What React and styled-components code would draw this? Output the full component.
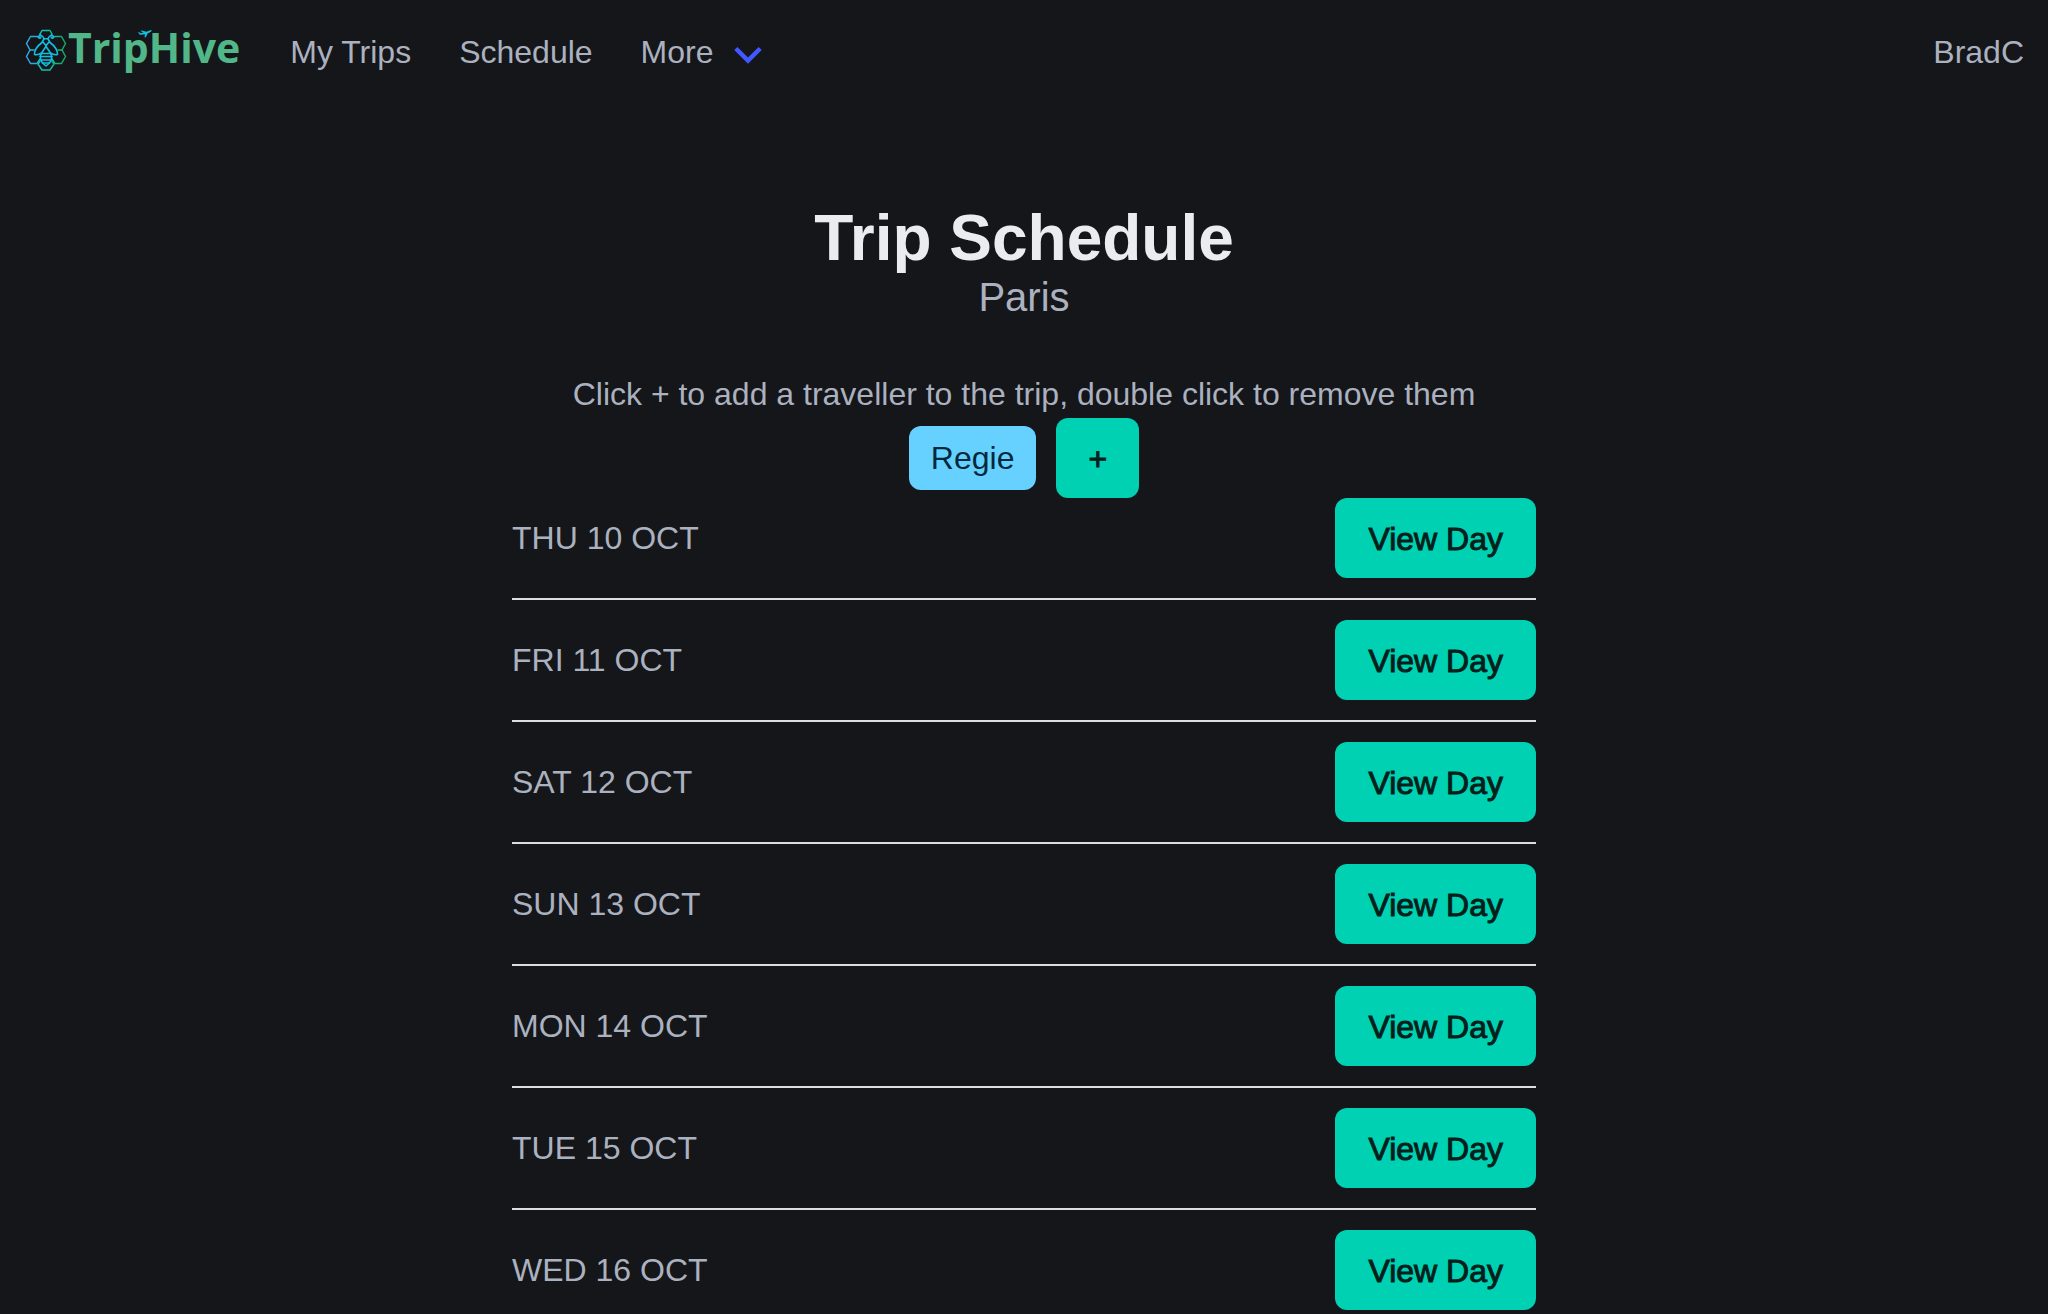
import React from "react";
import styled, { createGlobalStyle } from "styled-components";

const GlobalStyle = createGlobalStyle`
  *, *::before, *::after { box-sizing: border-box; }
  body {
    margin: 0;
    background: #14161a;
    color: #abb1bf;
    font-family: "Liberation Sans", Arial, sans-serif;
    font-size: 32px;
    line-height: 48px;
  }
`;

const Navbar = styled.nav`
  display: flex;
  align-items: stretch;
  justify-content: space-between;
  min-height: 104px;
`;

const NavGroup = styled.div`
  display: flex;
  align-items: stretch;
`;

const Brand = styled.a`
  display: flex;
  align-items: center;
  padding: 0 26px 4px 24px;
  color: #52b788;
  text-decoration: none;
`;

const Wordmark = styled.span`
  position: relative;
  padding-bottom: 6px;
  font-family: "Open Sans", "Noto Sans", sans-serif;
  font-size: 41px;
  font-weight: 700;
`;

const Plane = styled.svg`
  position: absolute;
  top: 7px;
  left: 70px;
`;

const NavLink = styled.a`
  display: flex;
  align-items: center;
  padding: 0 24px;
  color: inherit;
  text-decoration: none;
`;

const NavButton = styled.button`
  display: flex;
  align-items: center;
  gap: 20px;
  padding: 0 24px;
  border: 0;
  background: none;
  color: inherit;
  font: inherit;
  cursor: pointer;
`;

const Chevron = styled.svg`
  display: block;
  margin-top: 6px;
`;

const Section = styled.main`
  display: flex;
  flex-direction: column;
  align-items: center;
  padding: 98px 48px;
`;

const Title = styled.h1`
  margin: 0;
  color: #ebecf0;
  font-size: 64px;
  font-weight: 700;
  line-height: 72px;
`;

const Subtitle = styled.p`
  margin: 0 0 50px;
  font-size: 40px;
  line-height: 46px;
`;

const Hint = styled.p`
  margin: 0;
  text-align: center;
`;

const Travellers = styled.div`
  display: flex;
  align-items: center;
  gap: 20px;
`;

const Tag = styled.button`
  height: 64px;
  padding: 0 22px;
  border: 0;
  border-radius: 12px;
  background: #66d1ff;
  color: #00293d;
  font: inherit;
  cursor: pointer;
`;

const Button = styled.button`
  height: 80px;
  padding: 2px ${(props) => (props.$compact ? 32 : 33)}px 0;
  border: 0;
  border-radius: 12px;
  background: #00d1b2;
  color: #001f1b;
  font: inherit;
  -webkit-text-stroke: 1px currentColor;
  cursor: pointer;
`;

const DayList = styled.ul`
  display: flex;
  flex-direction: column;
  gap: 20px;
  width: 100%;
  max-width: 1024px;
  margin: 0;
  padding: 0;
  list-style: none;
`;

const DayRow = styled.li`
  display: flex;
  align-items: center;
  justify-content: space-between;
  padding-bottom: 20px;
  border-bottom: 2px solid #dddddd;
`;

const days = [
  "THU 10 OCT",
  "FRI 11 OCT",
  "SAT 12 OCT",
  "SUN 13 OCT",
  "MON 14 OCT",
  "TUE 15 OCT",
  "WED 16 OCT",
];

function BeeLogo() {
  return (
    <svg width="44" height="44" viewBox="0 0 44 44" fill="none" strokeLinecap="round" strokeLinejoin="round" aria-hidden="true">
      <defs>
        <linearGradient id="hive" gradientUnits="userSpaceOnUse" x1="2" y1="0" x2="42" y2="0">
          <stop offset="0" stopColor="#38a3eb" />
          <stop offset="0.5" stopColor="#12bfae" />
          <stop offset="1" stopColor="#1aa55c" />
        </linearGradient>
      </defs>
      <g stroke="url(#hive)" strokeWidth="1.5">
        <path d="M16 6 L18 2.500 H26 L28 6 L27 8" />
        <path d="M16 6 L17 8" />
        <path d="M15 9.500 L13 8.500 H6.500 L2.500 15.500 L6 22 H10" />
        <path d="M6 22 L2.500 28.500 L6.500 35.500 H13 L16 31" />
        <path d="M29 9.500 L31 8.500 H37.500 L41.500 15.500 L38 22 H34" />
        <path d="M38 22 L41.500 28.500 L37.500 35.500 H31 L28 31" />
        <path d="M16 33.500 L14 36 L18 42 H26 L30 36 L28 33.500" />
      </g>
      <g stroke="#12bfe3" strokeWidth="1.6">
        <path d="M20 10.800 C19 7.500 16 6.500 14.800 8.200 C14.300 10 15.800 10.800 16.800 9.600" />
        <path d="M24 10.800 C25 7.500 28 6.500 29.200 8.200 C29.700 10 28.200 10.800 27.200 9.600" />
        <path d="M20 10.800 H24 L25.500 13.500 L22 17.500 L18.500 13.500 Z" />
        <path d="M18.500 14 C14 17.500 10 21 10.500 26.500 C13 27 16 26 17.500 25 L22 18.500 L26.500 25 C28 26 31 27 33.500 26.500 C34 21 30 17.500 25.500 14" />
        <path d="M17.500 25.500 H26.500 L28 28.500 H16 Z" />
        <path d="M16.500 28.500 V32 H27.500 V28.500" />
        <path d="M17 32 L18.500 35 H25.500 L27 32" />
        <path d="M18.500 35 L22 38 L25.500 35" />
      </g>
    </svg>
  );
}

export default function App() {
  return (
    <>
      <GlobalStyle />
      <Navbar aria-label="Main navigation">
        <NavGroup>
          <Brand href="#home">
            <BeeLogo />
            <Wordmark>
              TripHive
              <Plane width="14" height="8" viewBox="0 0 14 8" aria-hidden="true">
                <path
                  d="M0 2.200 L1.200 2.200 L2.800 3.200 L5.500 2.600 L2.400 0.900 L3.800 0.600 L8.600 1.800 L11.500 0.600 C12.500 0.200 13.600 0.200 13.700 0.700 C13.600 1.300 12.600 1.900 11.600 2.400 L9.600 3.400 L7.800 7.300 L6.600 7.600 L6.900 4.200 L3 4.800 C1.800 4.800 1 3.800 0 2.200 Z"
                  fill="#12bfe3"
                />
              </Plane>
            </Wordmark>
          </Brand>
          <NavLink href="#trips">My Trips</NavLink>
          <NavLink href="#schedule">Schedule</NavLink>
          <NavButton type="button">
            More
            <Chevron width="30" height="20" viewBox="0 0 30 20" fill="none" aria-hidden="true">
              <path d="M2.800 3.500 L15 15.500 L27.200 3.500" stroke="#4258ff" strokeWidth="4.500" />
            </Chevron>
          </NavButton>
        </NavGroup>
        <NavGroup>
          <NavLink href="#profile">BradC</NavLink>
        </NavGroup>
      </Navbar>
      <Section>
        <Title>Trip Schedule</Title>
        <Subtitle>Paris</Subtitle>
        <Hint>Click + to add a traveller to the trip, double click to remove them</Hint>
        <Travellers>
          <Tag type="button">Regie</Tag>
          <Button type="button" $compact aria-label="Add traveller">+</Button>
        </Travellers>
        <DayList>
          {days.map((day) => (
            <DayRow key={day}>
              <span>{day}</span>
              <Button type="button">View Day</Button>
            </DayRow>
          ))}
        </DayList>
      </Section>
    </>
  );
}
